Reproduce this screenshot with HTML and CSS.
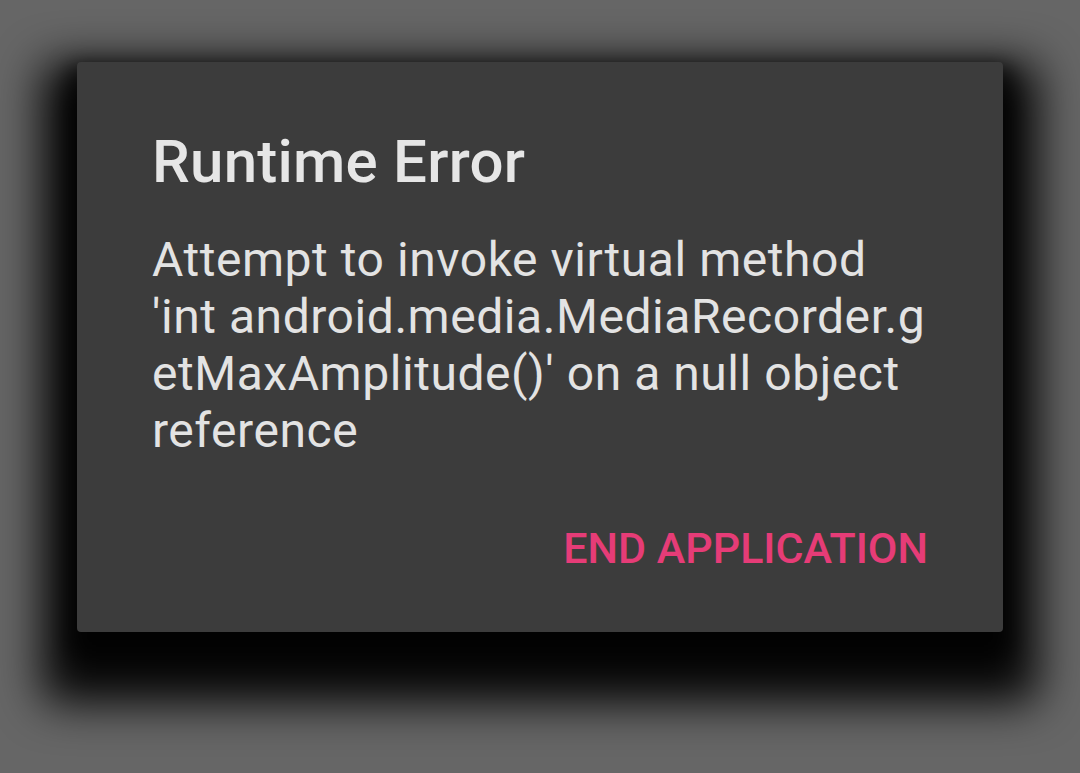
FILE: index.html
```html
<!DOCTYPE html>
<html>
<head>
<meta charset="utf-8">
<link rel="stylesheet" href="styles.css">
</head>
<body>
<div class="dialog">
  <div class="title">Runtime Error</div>
  <div class="message">Attempt to invoke virtual method<br>'int android.media.MediaRecorder.g<br>etMaxAmplitude()' on a null object<br>reference</div>
  <div class="actions"><span class="button">END APPLICATION</span></div>
</div>
</body>
</html>
```
FILE: styles.css
```css
html, body {
  margin: 0;
  padding: 0;
  background: #666666;
  width: 1080px;
  height: 773px;
  overflow: hidden;
  font-family: Roboto, "Noto Sans", sans-serif;
}
body {
  padding: 62px 0 0 77px;
  box-sizing: border-box;
}
.dialog {
  width: 926px;
  height: 570px;
  box-sizing: border-box;
  background: #3c3c3c;
  border-radius: 4px;
  box-shadow: 0 36px 45px 35px rgba(0,0,0,0.95), 0 12px 20px 10px rgba(0,0,0,0.6);
  padding: 65px 75px 0 75px;
  display: flex;
  flex-direction: column;
}
.title {
  font-size: 60px;
  line-height: 70px;
  font-weight: 500;
  letter-spacing: 0.25px;
  color: #e6e6e6;
}
.message {
  margin-top: 34px;
  font-size: 48px;
  line-height: 57px;
  letter-spacing: 0.55px;
  color: #e3e3e3;
  white-space: nowrap;
}
.actions {
  margin-top: 64px;
  display: flex;
  justify-content: flex-end;
}
.button {
  font-size: 43px;
  line-height: 50px;
  font-weight: 500;
  color: #e63c77;
}
```
